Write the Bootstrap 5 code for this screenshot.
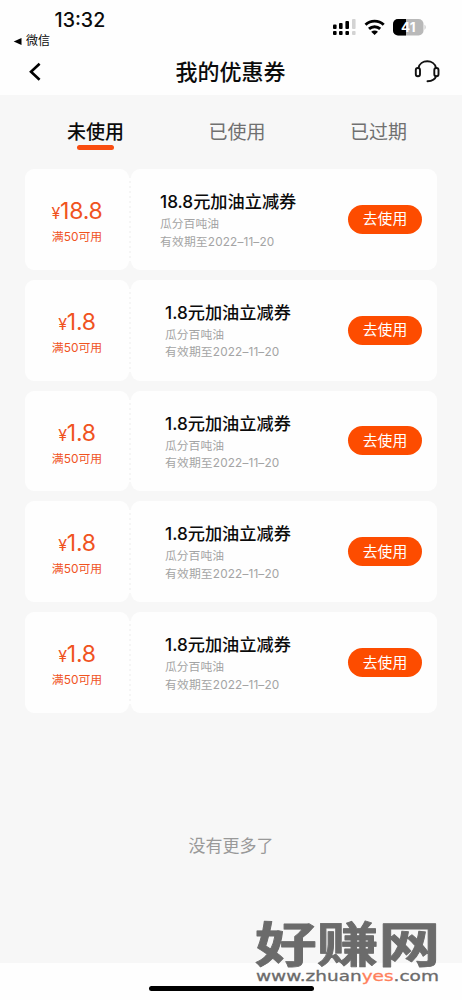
<!DOCTYPE html>
<html lang="zh-CN">
<head>
<meta charset="utf-8">
<meta name="viewport" content="width=device-width, initial-scale=1">
<title>我的优惠券</title>
<link href="https://cdn.jsdelivr.net/npm/bootstrap@5.3.0/dist/css/bootstrap.min.css" rel="stylesheet">
<style>
  body { font-family: Inter, "Noto Sans CJK SC", sans-serif; background: #f7f7f7; color: #0b0b0b; height: 1000px; overflow: hidden; }
  svg { display: block; flex: none; }
  .top { height: 95px; background: #fefefe; }
  .status { height: 50px; padding: 0 35px 0 13px; }
  .clock { font-size: 19.6px; font-weight: 500; line-height: 22px; padding: 9px 0 0 41.5px; }
  .back-app { font-size: 12px; line-height: 16px; margin-top: 2px; gap: 4px; }
  .titlebar { height: 45px; padding: 0 22px 1px 28px; }
  .titlebar h1 { font-size: 22px; line-height: 30px; font-weight: 500; margin: 0 0 0 5px; }
  .tabs { height: 74px; padding: 24px 55px 0 67px; font-size: 19px; line-height: 27px; color: #707070; }
  .tabs .on { color: #0b0b0b; font-weight: 500; }
  .tabs .on::after { content: ""; display: block; width: 37px; height: 5px; border-radius: 3px; background: #f94d10; margin: -1px auto 0; }
  .coupons { padding: 0 25px; gap: 10px; }
  .coupon { height: 100.8px; }
  .amount { width: 104px; background: #fefefe; border-radius: 9px; color: #f0531e; padding-top: 27px; }
  .price { font-size: 23px; line-height: 30px; letter-spacing: -.2px; }
  .price span { font-size: 16px; }
  .limit { font-size: 11.9px; line-height: 16px; margin-top: 1px; }
  .tear { width: 2px; margin: 9px 0; background: repeating-linear-gradient(#fefefe 0 3px, #f5f5f5 3px 5px); }
  .detail { background: #fefefe; border-radius: 9px; padding-right: 15px; padding-left: 29px; }
  .detail.short { padding-left: 34px; }
  .name { font-size: 17.2px; font-weight: 500; line-height: 24px; margin: 21px 0 2px; }
  .note { font-size: 11.8px; line-height: 17.500px; color: #a4a4a4; }
  .date { letter-spacing: .15px; }
  .use { --bs-btn-color: #fff; --bs-btn-bg: #fd4c00; --bs-btn-border-color: #fd4c00; width: 74px; height: 29px; padding: 0; border: 0; font-size: 14.8px; line-height: 28px; }
  .more { font-size: 17px; line-height: 24px; color: #999; margin-top: 121px; }
  .home { height: 37px; background: #fefefe; padding-top: 22.500px; }
  .home div { width: 165px; height: 5.500px; border-radius: 3px; background: #000; }
  .stamp { left: 250px; top: 900px; }
</style>
</head>
<body class="d-flex flex-column position-relative">
<header class="top">
  <div class="status d-flex justify-content-between">
    <div>
      <div class="clock">13:32</div>
      <div class="back-app d-flex align-items-center"><svg width="9" height="9"><path d="M.7 4.5 8.5 1v7z"/></svg><span>微信</span></div>
    </div>
    <svg width="96" height="20" viewBox="331 17 96 20" style="margin-top:17px">
      <g fill="#000"><rect x="333" y="24.500" width="3.6" height="4.500" rx="1"/><rect x="339" y="23" width="3.6" height="6" rx="1"/><rect x="345.4" y="21" width="3.6" height="8" rx="1"/><rect x="333" y="31" width="3.6" height="4" rx="1"/><rect x="339" y="31" width="3.6" height="4" rx="1"/><rect x="345.4" y="31" width="3.6" height="4" rx="1"/></g>
      <g fill="#d3d3d3"><rect x="352" y="19" width="3.6" height="10" rx="1"/><rect x="352" y="31" width="3.6" height="4" rx="1"/></g>
      <g fill="none" stroke="#000" stroke-width="2.9"><path d="M365.5 24.700a13.3 13.3 0 0 1 18.2 0"/><path d="M369 28.900a8.2 8.2 0 0 1 11.2 0"/></g><path d="M371.2 31.700q3.400-2.200 6.800 0l-3.400 3.200z"/>
      <rect x="393" y="19" width="30.5" height="16.5" rx="5" fill="#b9b9b9"/><path d="M406 19h-8a5 5 0 0 0-5 5v6.5a5 5 0 0 0 5 5h8z"/><path d="M424.6 24.5q2 2.7 0 5.4z" fill="#b9b9b9"/>
      <text x="408.300" y="32" text-anchor="middle" font-size="13.5" font-weight="700" fill="#fff">41</text>
    </svg>
  </div>
  <div class="titlebar d-flex justify-content-between align-items-center">
    <svg width="14" height="20" viewBox="0 0 14 20" fill="none" stroke="#000" stroke-width="2.6"><path d="M11.6 1.8 3 9.800l8.6 8"/></svg>
    <h1>我的优惠券</h1>
    <svg width="26" height="24" viewBox="414 60 26 24" fill="none" stroke="#111" stroke-width="1.9" stroke-linecap="round"><path d="M418.5 68c1.500-9 16-9 17.500 0M436 76.200c-.8 3-3.500 4.800-8.500 5"/><rect x="415.800" y="68" width="4.200" height="8.200" rx="2"/><rect x="434.300" y="68" width="4.200" height="8.200" rx="2"/></svg>
  </div>
</header>
<main class="flex-grow-1">
  <nav class="tabs d-flex justify-content-between align-items-start"><div class="on">未使用</div><div>已使用</div><div>已过期</div></nav>
  <section class="coupons d-flex flex-column">
    <article class="coupon d-flex">
      <div class="amount text-center"><div class="price"><span>¥</span>18.8</div><div class="limit">满50可用</div></div><div class="tear"></div>
      <div class="detail flex-grow-1 d-flex justify-content-between align-items-center"><div class="align-self-start"><div class="name">18.8元加油立减券</div><div class="note">瓜分百吨油</div><div class="note date">有效期至2022–11–20</div></div><button class="btn use rounded-pill">去使用</button></div>
    </article>
    <article class="coupon d-flex">
      <div class="amount text-center"><div class="price"><span>¥</span>1.8</div><div class="limit">满50可用</div></div><div class="tear"></div>
      <div class="detail short flex-grow-1 d-flex justify-content-between align-items-center"><div class="align-self-start"><div class="name">1.8元加油立减券</div><div class="note">瓜分百吨油</div><div class="note date">有效期至2022–11–20</div></div><button class="btn use rounded-pill">去使用</button></div>
    </article>
    <article class="coupon d-flex">
      <div class="amount text-center"><div class="price"><span>¥</span>1.8</div><div class="limit">满50可用</div></div><div class="tear"></div>
      <div class="detail short flex-grow-1 d-flex justify-content-between align-items-center"><div class="align-self-start"><div class="name">1.8元加油立减券</div><div class="note">瓜分百吨油</div><div class="note date">有效期至2022–11–20</div></div><button class="btn use rounded-pill">去使用</button></div>
    </article>
    <article class="coupon d-flex">
      <div class="amount text-center"><div class="price"><span>¥</span>1.8</div><div class="limit">满50可用</div></div><div class="tear"></div>
      <div class="detail short flex-grow-1 d-flex justify-content-between align-items-center"><div class="align-self-start"><div class="name">1.8元加油立减券</div><div class="note">瓜分百吨油</div><div class="note date">有效期至2022–11–20</div></div><button class="btn use rounded-pill">去使用</button></div>
    </article>
    <article class="coupon d-flex">
      <div class="amount text-center"><div class="price"><span>¥</span>1.8</div><div class="limit">满50可用</div></div><div class="tear"></div>
      <div class="detail short flex-grow-1 d-flex justify-content-between align-items-center"><div class="align-self-start"><div class="name">1.8元加油立减券</div><div class="note">瓜分百吨油</div><div class="note date">有效期至2022–11–20</div></div><button class="btn use rounded-pill">去使用</button></div>
    </article>
  </section>
  <p class="more text-center mb-0">没有更多了</p>
</main>
<footer class="home"><div class="mx-auto"></div></footer>
<svg class="stamp position-absolute" width="200" height="90" viewBox="250 900 200 90" fill="#6b6b6b">
  <text transform="translate(255 962) scale(1.3 1)" font-size="47.500" font-weight="700" font-family="Noto Sans CJK SC, sans-serif" stroke="#6b6b6b" stroke-width=".8" stroke-linejoin="round">好赚网</text>
  <text transform="translate(256 981) scale(1.21 1)" font-size="14" font-family="DejaVu Sans, sans-serif" stroke="#6b6b6b" stroke-width=".3" textLength="151.200" lengthAdjust="spacingAndGlyphs">www.zhuan<tspan fill="#ff805c" stroke="#ff805c">yes</tspan>.com</text>
</svg>
<script src="https://cdn.jsdelivr.net/npm/bootstrap@5.3.0/dist/js/bootstrap.bundle.min.js"></script>
</body>
</html>
